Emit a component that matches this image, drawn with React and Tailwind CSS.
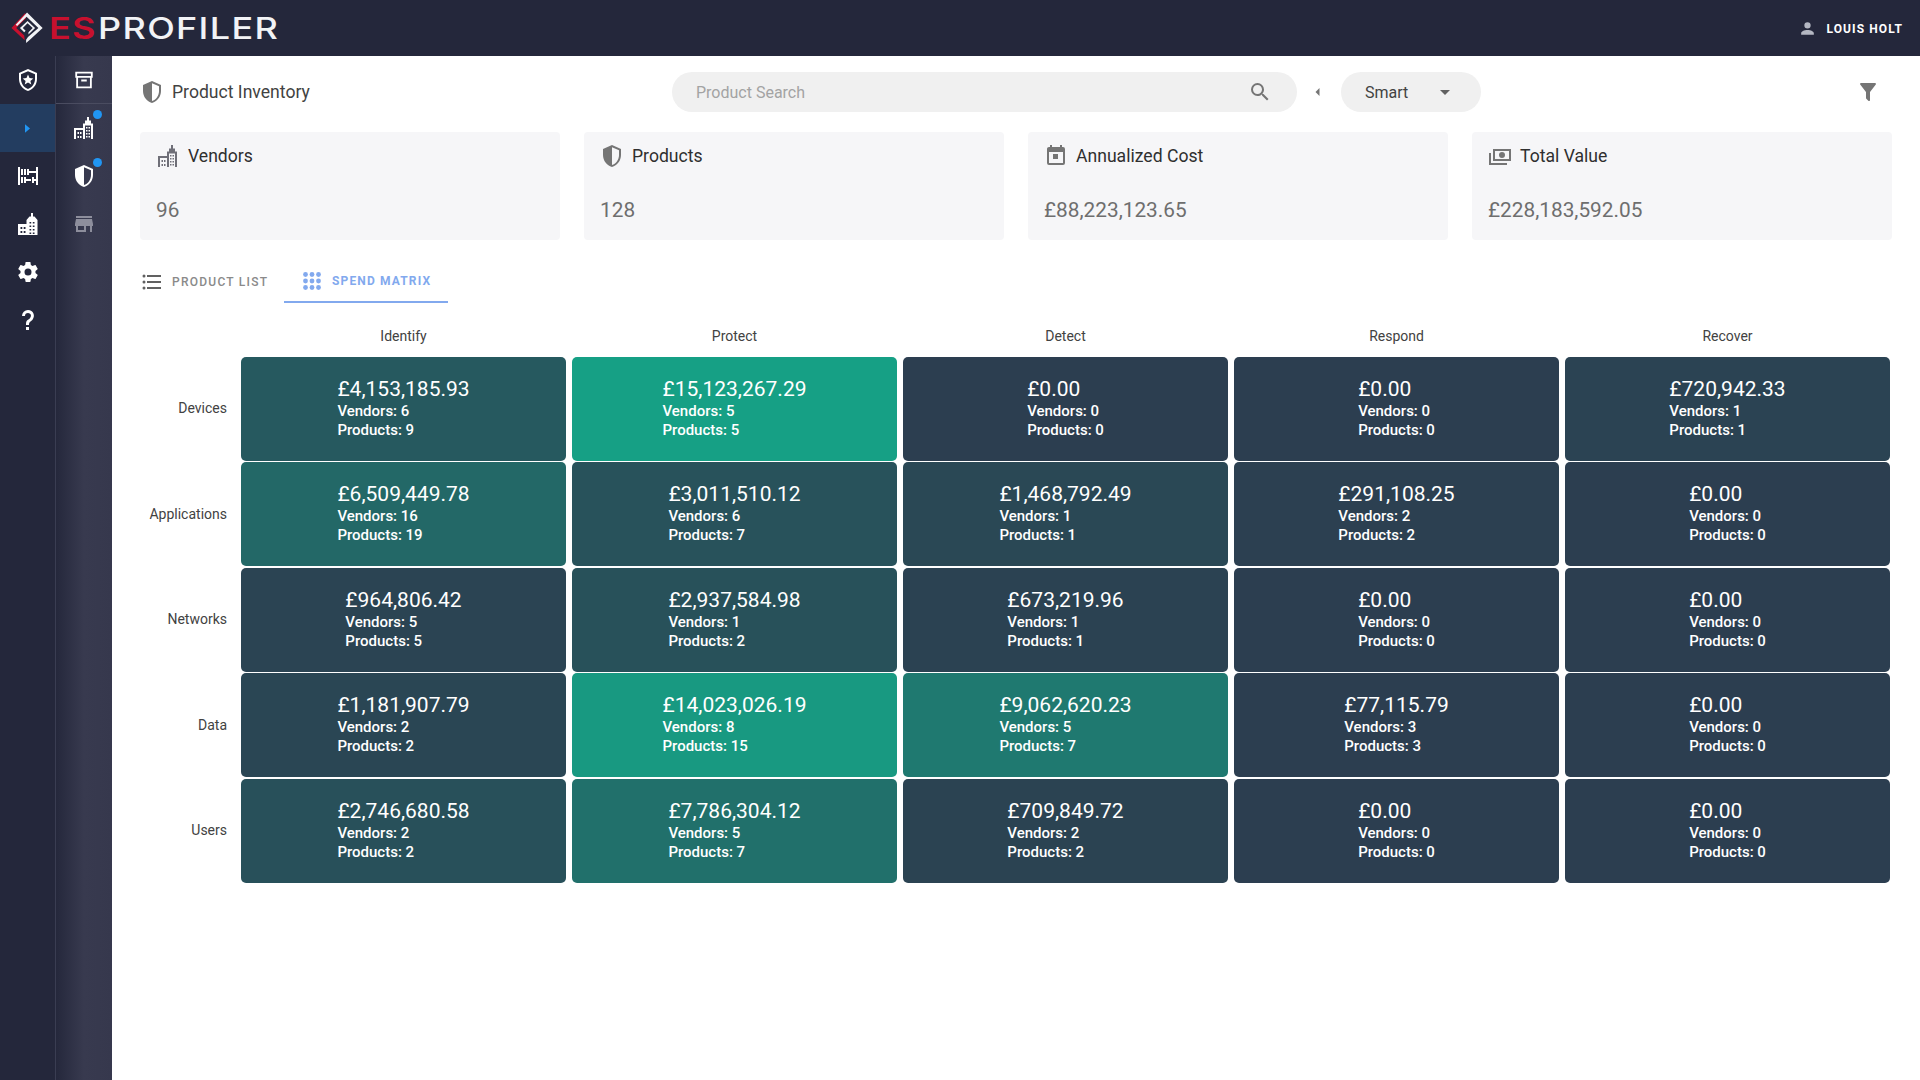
import React from 'react';

const I = ({ d, className = '', children }) => (
  <svg viewBox="0 0 24 24" className={className} fill="currentColor" fillRule="evenodd">
    {d && <path d={d} />}
    {children}
  </svg>
);

const P = {
  shieldHalf: 'M21,11C21,16.55 17.16,21.74 12,23C6.84,21.74 3,16.55 3,11V5L12,1L21,5V11M12,21C15.75,20 19,15.54 19,11.22V6.3L12,3.18V21Z',
  shieldStar: 'M12,1L3,5V11C3,16.55 6.84,21.74 12,23C17.16,21.74 21,16.55 21,11V5L12,1M12,3.18L19,6.3V11C19,15.52 16.02,19.69 12,20.93C7.98,19.69 5,15.52 5,11V6.3L12,3.18ZM12,6.6L13.5,10.1L17.3,10.4L14.4,12.9L15.3,16.6L12,14.6L8.7,16.6L9.6,12.9L6.7,10.4L10.5,10.1Z',
  abacus: 'M5 5H7V11H5V5M10 5H8V11H10V5M5 19H7V13H5V19M10 13H8V19H10V17H15V15H10V13M2 21H4V3H2V21M20 3V7H13V5H11V11H13V9H20V15H18V13H16V19H18V17H20V21H22V3H20Z',
  cog: 'M12,15.5A3.5,3.5 0 0,1 8.5,12A3.5,3.5 0 0,1 12,8.5A3.5,3.5 0 0,1 15.5,12A3.5,3.5 0 0,1 12,15.5M19.43,12.97C19.47,12.65 19.5,12.33 19.5,12C19.5,11.67 19.47,11.34 19.43,11L21.54,9.37C21.73,9.22 21.78,8.95 21.66,8.73L19.66,5.27C19.54,5.05 19.27,4.96 19.05,5.05L16.56,6.05C16.04,5.66 15.5,5.32 14.87,5.07L14.5,2.42C14.46,2.18 14.25,2 14,2H10C9.75,2 9.54,2.18 9.5,2.42L9.13,5.07C8.5,5.32 7.96,5.66 7.44,6.05L4.95,5.05C4.73,4.96 4.46,5.05 4.34,5.27L2.34,8.73C2.21,8.95 2.27,9.22 2.46,9.37L4.57,11C4.53,11.34 4.5,11.67 4.5,12C4.5,12.33 4.53,12.65 4.57,12.97L2.46,14.63C2.27,14.78 2.21,15.05 2.34,15.27L4.34,18.73C4.46,18.95 4.73,19.03 4.95,18.95L7.44,17.94C7.96,18.34 8.5,18.68 9.13,18.93L9.5,21.58C9.54,21.82 9.75,22 10,22H14C14.25,22 14.46,21.82 14.5,21.58L14.87,18.93C15.5,18.67 16.04,18.34 16.56,17.94L19.05,18.95C19.27,19.03 19.54,18.95 19.66,18.73L21.66,15.27C21.78,15.05 21.73,14.78 21.54,14.63L19.43,12.97Z',
  help: 'M10,19H13V22H10V19M12,2C17.35,2.22 19.68,7.62 16.5,11.67C15.67,12.67 14.33,13.33 13.67,14.17C13,15 13,16 13,17H10C10,15.33 10,13.92 10.67,12.92C11.33,11.92 12.67,11.33 13.5,10.67C15.92,8.43 15.32,5.26 12,5A3,3 0 0,0 9,8H6A6,6 0 0,1 12,2Z',
  archive: 'M2.5 3H21.5V9.5H20.5V21H3.5V9.5H2.5V3ZM4.5 5V7.5H19.5V5H4.5ZM5.5 9.5V19H18.5V9.5H5.5ZM9 11.5H15V13.5H9V11.5Z',
  store: 'M12,18H6V14H12M21,14V12L20,7H4L3,12V14H4V20H14V14H18V20H20V14M20,4H4V6H20V4Z',
  calendar: 'M9,10H14V15H9M19,19H5V8H19M19,3H18V1H16V3H8V1H6V3H5C3.89,3 3,3.9 3,5V19A2,2 0 0,0 5,21H19A2,2 0 0,0 21,19V5A2,2 0 0,0 19,3Z',
  cash: 'M5,5H23V17H5V5M7,7V15H21V7H7M14,8A3,3 0 0,1 17,11A3,3 0 0,1 14,14A3,3 0 0,1 11,11A3,3 0 0,1 14,8M1,9H3V19H19V21H1V9Z',
  search: 'M9.5,3A6.5,6.5 0 0,1 16,9.5C16,11.11 15.41,12.59 14.44,13.73L14.71,14H15.5L20.5,19L19,20.5L14,15.5V14.71L13.73,14.44C12.59,15.41 11.11,16 9.5,16A6.5,6.5 0 0,1 3,9.5A6.5,6.5 0 0,1 9.5,3M9.5,5C7,5 5,7 5,9.5C5,12 7,14 9.5,14C12,14 14,12 14,9.5C14,7 12,5 9.5,5Z',
  filter: 'M14,12V19.88C14.04,20.18 13.94,20.5 13.71,20.71C13.32,21.1 12.69,21.1 12.3,20.71L10.29,18.7C10.06,18.47 9.96,18.16 10,17.87V12H9.97L4.21,4.62C3.87,4.19 3.95,3.56 4.38,3.22C4.57,3.08 4.78,3 5,3H19C19.22,3 19.43,3.08 19.62,3.22C20.05,3.56 20.13,4.19 19.79,4.62L14.03,12H14Z',
  list: 'M7,5H21V7H7V5M7,13V11H21V13H7M4,4.5A1.5,1.5 0 0,1 5.5,6A1.5,1.5 0 0,1 4,7.5A1.5,1.5 0 0,1 2.5,6A1.5,1.5 0 0,1 4,4.5M4,10.5A1.5,1.5 0 0,1 5.5,12A1.5,1.5 0 0,1 4,13.5A1.5,1.5 0 0,1 2.5,12A1.5,1.5 0 0,1 4,10.5M7,19V17H21V19H7M4,16.5A1.5,1.5 0 0,1 5.5,18A1.5,1.5 0 0,1 4,19.5A1.5,1.5 0 0,1 2.5,18A1.5,1.5 0 0,1 4,16.5Z',
  account: 'M12,4A4,4 0 0,1 16,8A4,4 0 0,1 12,12A4,4 0 0,1 8,8A4,4 0 0,1 12,4M12,14C16.42,14 20,15.79 20,18V20H4V18C4,15.79 7.58,14 12,14Z',
  cityOutline: 'M15 1H17V4.5H19V7.5H21V23H19V9.5H13V23H11V14H4V23H2V12H11V7.5H13V4.5H15V1ZM14 11H15.5V12.5H14ZM16.5 11H18V12.5H16.5ZM14 14H15.5V15.5H14ZM16.5 14H18V15.5H16.5ZM14 17H15.5V18.5H14ZM16.5 17H18V18.5H16.5ZM14 20H15.5V21.5H14ZM16.5 20H18V21.5H16.5ZM5.5 16H7V18H5.5ZM8 16H9.5V18H8ZM5.5 20H7V22H5.5ZM8 20H9.5V22H8Z',
  citySolid: 'M15 1H17V4.5H18.5L21.5 8V23H2V12H10.5V8L13.5 4.5H15V1ZM13.5 10V11.5H15.2V10ZM16.8 10V11.5H18.5V10ZM13.5 13.5V15H15.2V13.5ZM16.8 13.5V15H18.5V13.5ZM13.5 17V18.5H15.2V17ZM16.8 17V18.5H18.5V17ZM13.5 20.5V22H15.2V20.5ZM16.8 20.5V22H18.5V20.5ZM4.5 15V17H6.3V15ZM7.7 15V17H9.5V15ZM4.5 19V21H6.3V19ZM7.7 19V21H9.5V19Z',
};

const Logo = () => (
  <svg viewBox="0 0 36 36" className="w-[34px] h-[34px] shrink-0">
    <path d="M15 2L0.5 18L14.5 31L14 26L5.5 18L16 7.5Z" fill="#c8102e" />
    <path d="M17 1.5L33.5 18L20 30.5L16 34V30.5L18 27.5L29 18L16.5 6L6.5 16L5 14.5Z" fill="#f2f3f6" />
    <path d="M17.5 10.5L25.5 18L18.5 25V22.5L23 18L17.5 13L12.5 18L15.5 21L14 22.5L9.5 18Z" fill="#f2f3f6" />
  </svg>
);

const Dot = () => <span className="absolute top-[-6px] right-[-6px] w-[9px] h-[9px] rounded-full bg-[#2196f3]" />;

const cards = [
  { label: 'Vendors', value: '96', icon: P.cityOutline, iconClass: 'text-[#6f6f78]' },
  { label: 'Products', value: '128', icon: P.shieldHalf, iconClass: 'text-[#757575]' },
  { label: 'Annualized Cost', value: '£88,223,123.65', icon: P.calendar, iconClass: 'text-[#757575]' },
  { label: 'Total Value', value: '£228,183,592.05', icon: P.cash, iconClass: 'text-[#757575]' },
];

const cols = ['Identify', 'Protect', 'Detect', 'Respond', 'Recover'];
const rows = [
  ['Devices', [['£4,153,185.93', 6, 9], ['£15,123,267.29', 5, 5], ['£0.00', 0, 0], ['£0.00', 0, 0], ['£720,942.33', 1, 1]]],
  ['Applications', [['£6,509,449.78', 16, 19], ['£3,011,510.12', 6, 7], ['£1,468,792.49', 1, 1], ['£291,108.25', 2, 2], ['£0.00', 0, 0]]],
  ['Networks', [['£964,806.42', 5, 5], ['£2,937,584.98', 1, 2], ['£673,219.96', 1, 1], ['£0.00', 0, 0], ['£0.00', 0, 0]]],
  ['Data', [['£1,181,907.79', 2, 2], ['£14,023,026.19', 8, 15], ['£9,062,620.23', 5, 7], ['£77,115.79', 3, 3], ['£0.00', 0, 0]]],
  ['Users', [['£2,746,680.58', 2, 2], ['£7,786,304.12', 5, 7], ['£709,849.72', 2, 2], ['£0.00', 0, 0], ['£0.00', 0, 0]]],
];

const MAX = 15123267.29;
const cellColor = (amount) => {
  const v = parseFloat(amount.replace(/[£,]/g, ''));
  const t = v / MAX;
  const mix = (a, b) => Math.round(a + (b - a) * t);
  return `rgb(${mix(44, 22)},${mix(62, 160)},${mix(80, 133)})`;
};

const Cell = ({ data }) => (
  <div
    className="h-[104px] rounded-[5px] flex items-center justify-center text-white"
    style={{ backgroundColor: cellColor(data[0]) }}
  >
    <div className="text-left">
      <div className="text-[21px] leading-[24px] font-normal mb-[1px] -mt-[1px]">{data[0]}</div>
      <div className="text-[15px] leading-[19px] font-medium">Vendors: {data[1]}</div>
      <div className="text-[15px] leading-[19px] font-medium">Products: {data[2]}</div>
    </div>
  </div>
);

export default function App() {
  return (
    <div className="w-[1920px] h-[1080px] flex flex-col overflow-hidden bg-white font-['Roboto',sans-serif]">
      <header className="h-[56px] shrink-0 bg-[#24273b] flex items-center pl-[11px] pr-[17px]">
        <Logo />
        <div className="ml-[4px] flex items-center font-['Inter',sans-serif] font-medium text-[30px] leading-none tracking-[1.1px] origin-left scale-x-[1.2]">
          <span className="text-[#c8102e] font-semibold mr-[1px]">ES</span>
          <span className="text-[#f2f3f6]">PROFILER</span>
        </div>
        <div className="ml-auto flex items-center gap-[9px]">
          <I d={P.account} className="w-[19px] h-[19px] text-[#b4b7c2] ml-[1px]" />
          <span className="text-white text-[12px] font-bold tracking-[1.1px] mt-[1px]">LOUIS HOLT</span>
        </div>
      </header>

      <div className="flex-1 flex min-h-0">
        <nav className="w-[56px] shrink-0 bg-[#24273b] border-r border-[#3a3d52] flex flex-col items-center text-white">
          <div className="h-[48px] flex items-center justify-center w-full">
            <I d={P.shieldStar} className="w-[24px] h-[24px]" />
          </div>
          <div className="h-[48px] w-full bg-[#233d60] flex items-center justify-center">
            <svg viewBox="0 0 6 10" className="w-[5px] h-[9px] text-[#2196f3]" fill="currentColor"><path d="M0 0L6 5L0 10Z" /></svg>
          </div>
          <div className="h-[48px] flex items-center justify-center w-full">
            <I d={P.abacus} className="w-[24px] h-[24px]" />
          </div>
          <div className="h-[48px] flex items-center justify-center w-full">
            <I d={P.citySolid} className="w-[24px] h-[24px]" />
          </div>
          <div className="h-[48px] flex items-center justify-center w-full">
            <I d={P.cog} className="w-[24px] h-[24px]" />
          </div>
          <div className="h-[48px] flex items-center justify-center w-full">
            <I d={P.help} className="w-[24px] h-[24px]" />
          </div>
        </nav>
        <nav className="w-[56px] shrink-0 bg-gradient-to-r from-[#25283c] via-[#383a4f] to-[#36384d] flex flex-col items-center text-white">
          <div className="h-[48px] w-full flex items-center justify-center border-b border-[#4a4c60]">
            <I d={P.archive} className="w-[22px] h-[22px]" />
          </div>
          <div className="h-[48px] w-full flex items-center justify-center">
            <div className="relative">
              <I d={P.cityOutline} className="w-[24px] h-[24px] block" />
              <Dot />
            </div>
          </div>
          <div className="h-[48px] w-full flex items-center justify-center">
            <div className="relative">
              <I d={P.shieldHalf} className="w-[24px] h-[24px] block" />
              <Dot />
            </div>
          </div>
          <div className="h-[48px] w-full flex items-center justify-center">
            <I d={P.store} className="w-[24px] h-[24px] text-[#8d8e9c]" />
          </div>
        </nav>

        <main className="flex-1 min-w-0 pl-[28px] pr-[28px]">
          <div className="h-[40px] mt-[16px] flex items-center relative">
            <div className="w-[532px] flex items-center gap-[8px] text-[#424242]">
              <I d={P.shieldHalf} className="w-[24px] h-[24px] text-[#757575] shrink-0" />
              <span className="text-[17.6px] text-[#424242] mt-[1px]">Product Inventory</span>
            </div>
            <div className="w-[625px] h-[40px] rounded-full bg-[#f0f0f0] flex items-center pl-[24px] pr-[25px]">
              <span className="text-[16px] text-[#a3a3a3] mt-[1px]">Product Search</span>
              <I d={P.search} className="w-[24px] h-[24px] ml-auto text-[#757575]" />
            </div>
            <svg viewBox="0 0 5 10" className="w-[5px] h-[8px] ml-[18px] text-[#757575]" fill="currentColor"><path d="M5 0V10L0 5Z" /></svg>
            <div className="w-[140px] h-[40px] ml-[21px] rounded-full bg-[#f0f0f0] flex items-center pl-[24px] text-[16px] text-[#424242]">
              <span className="mt-[1px]">Smart</span>
              <svg viewBox="0 0 10 5" className="w-[10px] h-[5px] ml-[32px] text-[#616161]" fill="currentColor"><path d="M0 0H10L5 5Z" /></svg>
            </div>
            <I d={P.filter} className="w-[24px] h-[24px] ml-auto mr-[12px] text-[#757575]" />
          </div>

          <div className="mt-[20px] grid grid-cols-4 gap-[24px]">
            {cards.map((c) => (
              <div key={c.label} className="h-[108px] rounded-[4px] bg-[#f6f6f8] pl-[16px] pt-[12px]">
                <div className="flex items-center gap-[8px] h-[24px]">
                  <I d={c.icon} className={`w-[24px] h-[24px] shrink-0 ${c.iconClass}`} />
                  <span className="text-[17.6px] text-[#2f2f2f]">{c.label}</span>
                </div>
                <div className="mt-[28px] text-[20.8px] leading-[28px] text-[#6e6e6e]">{c.value}</div>
              </div>
            ))}
          </div>

          <div className="mt-[24px] flex h-[39px]">
            <div className="flex items-center w-[144px] pb-[3px] gap-[8px] text-[#8a8a8a]">
              <I d={P.list} className="w-[24px] h-[24px] text-[#616161]" />
              <span className="text-[12px] font-medium tracking-[1.25px]">PRODUCT LIST</span>
            </div>
            <div className="flex items-center w-[164px] pl-[19px] pb-[3px] gap-[11px] text-[#82a9ee] border-b-2 border-[#82a9ee]">
              <svg viewBox="0 0 18 18" className="w-[18px] h-[18px]" fill="currentColor">
                {[2.5, 9, 15.5].map((y) => [2.5, 9, 15.5].map((x) => <circle key={`${x}-${y}`} cx={x} cy={y} r="2.4" />))}
              </svg>
              <span className="text-[12px] font-bold tracking-[1.15px]">SPEND MATRIX</span>
            </div>
          </div>

          <div className="mt-[23px] grid grid-cols-[95px_repeat(5,325px)] gap-x-[6px] gap-y-[1.5px]">
            <div />
            {cols.map((c) => (
              <div key={c} className="text-center text-[14px] leading-[20px] text-[#424242] mb-[9px]">{c}</div>
            ))}
            {rows.map(([label, cells]) => (
              <React.Fragment key={label}>
                <div className="flex items-center justify-end pr-[8px] text-[14px] text-[#424242]">{label}</div>
                {cells.map((d, i) => <Cell key={i} data={d} />)}
              </React.Fragment>
            ))}
          </div>
        </main>
      </div>
    </div>
  );
}
